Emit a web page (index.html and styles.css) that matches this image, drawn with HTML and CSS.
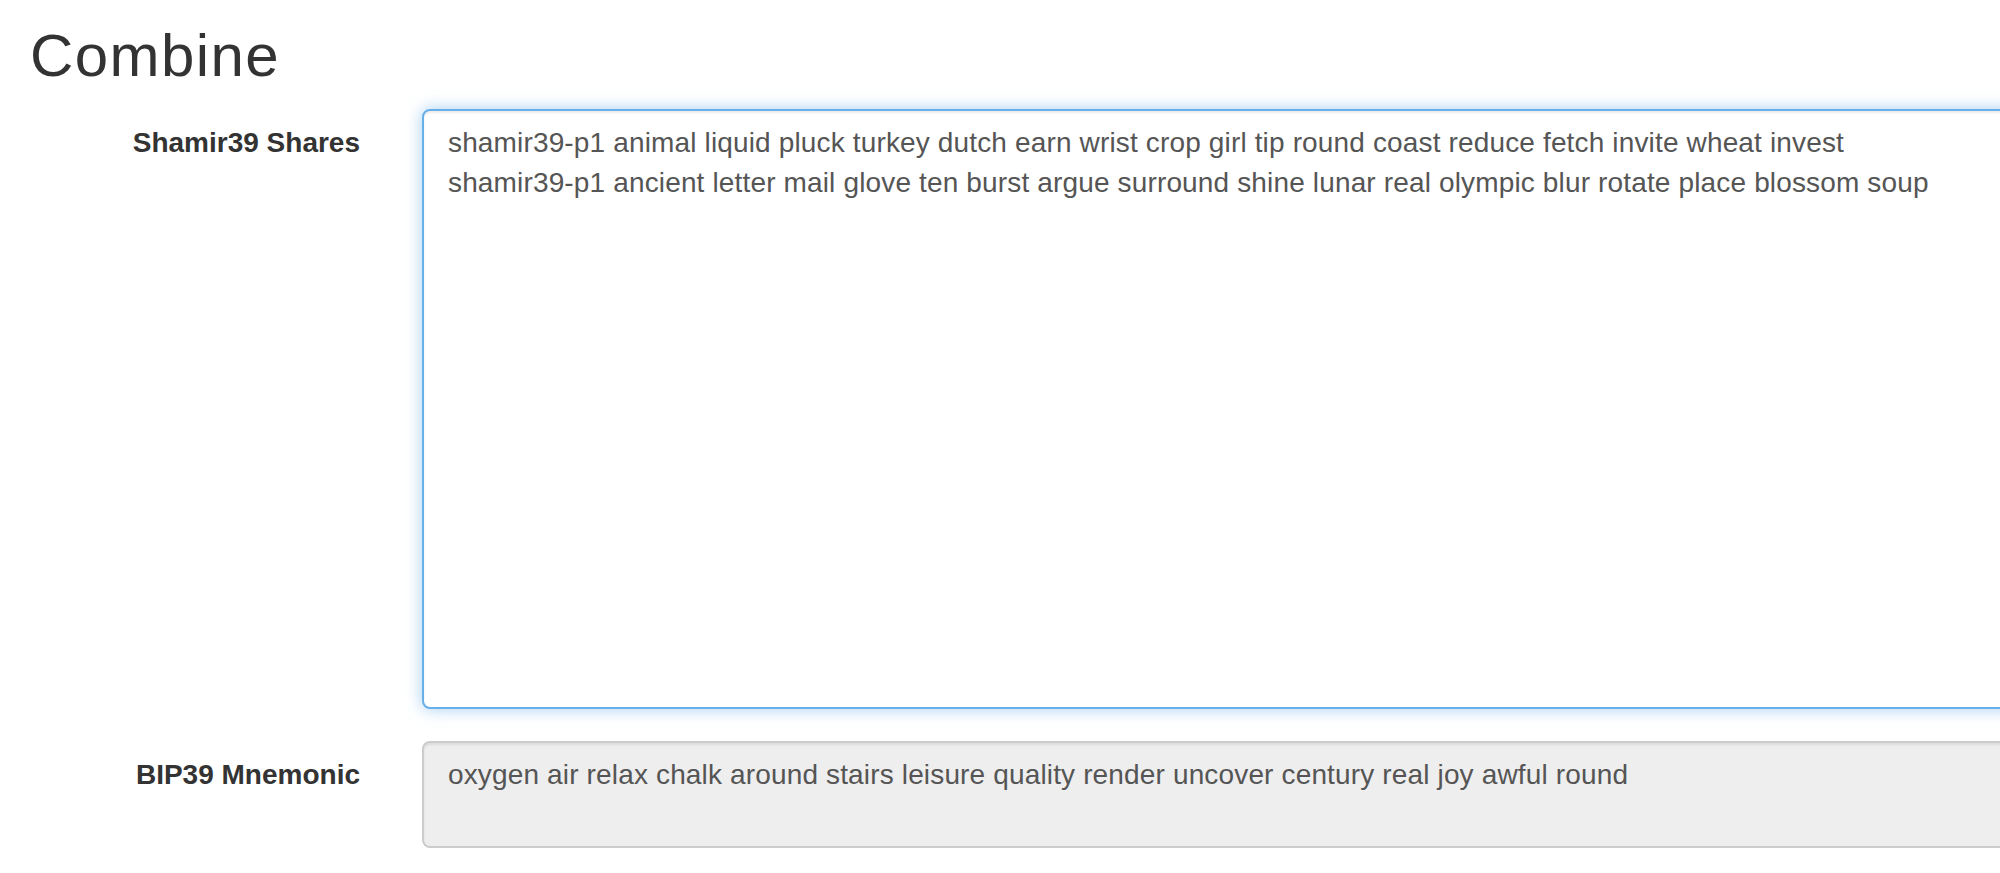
FILE: index.html
```html
<!DOCTYPE html>
<html lang="en">
<head>
  <meta charset="UTF-8" />
  <meta name="viewport" content="width=device-width, initial-scale=1.0"/>
  <title>Combine</title>
  <link rel="stylesheet" href="styles.css">
</head>
<body>

  <div class="container">
    <h2>Combine</h2>

    <form class="form-horizontal">
      <!-- Shares input -->
      <div class="form-group">
        <label class="control-label" for="shares">Shamir39 Shares</label>
        <div class="field">
          <textarea id="shares" class="form-control shares focused" spellcheck="false">shamir39-p1 animal liquid pluck turkey dutch earn wrist crop girl tip round coast reduce fetch invite wheat invest
shamir39-p1 ancient letter mail glove ten burst argue surround shine lunar real olympic blur rotate place blossom soup</textarea>
        </div>
      </div>

      <!-- Result -->
      <div class="form-group">
        <label class="control-label" for="mnemonic">BIP39 Mnemonic</label>
        <div class="field">
          <textarea id="mnemonic" class="form-control mnemonic" rows="2" readonly spellcheck="false">oxygen air relax chalk around stairs leisure quality render uncover century real joy awful round</textarea>
        </div>
      </div>
    </form>
  </div>

</body>
</html>
```

FILE: styles.css
```css
* { margin: 0; padding: 0; box-sizing: border-box; }

html, body {
  height: 100%;
  overflow: hidden;
  background: #fff;
  font-family: 'Liberation Sans', Arial, sans-serif;
  font-size: 28px;
  line-height: 40px;
  color: #333;
}

.container {
  padding: 0 30px;
}

h2 {
  font-size: 60px;
  font-weight: 500;
  line-height: 66px;
  letter-spacing: 1.4px;
  margin-top: 23px;
  margin-bottom: 20px;
}

.form-horizontal {
  width: 2340px;
  margin: 0 -30px;
}

.form-group {
  display: grid;
  grid-template-columns: 390px 1fr;
  margin-bottom: 32px;
}

.control-label {
  padding: 14px 30px 0;
  text-align: right;
  font-weight: bold;
}

.field {
  padding: 0 30px 0 32px;
}

.form-control {
  display: block;
  width: 100%;
  padding: 12px 24px;
  font-family: inherit;
  font-size: 28px;
  line-height: 40px;
  letter-spacing: 0.15px;
  color: #555;
  background: #fff;
  border: 2px solid #ccc;
  border-radius: 8px;
  box-shadow: inset 0 2px 2px rgba(0, 0, 0, 0.075);
  resize: vertical;
  outline: none;
  overflow: hidden;
}

.form-control.focused {
  border-color: #66afe9;
  box-shadow: inset 0 2px 2px rgba(0, 0, 0, 0.075), 0 0 16px rgba(102, 175, 233, 0.6);
}

.shares { height: 600px; }

.mnemonic {
  height: 107px;
  background: #eee;
}
```
